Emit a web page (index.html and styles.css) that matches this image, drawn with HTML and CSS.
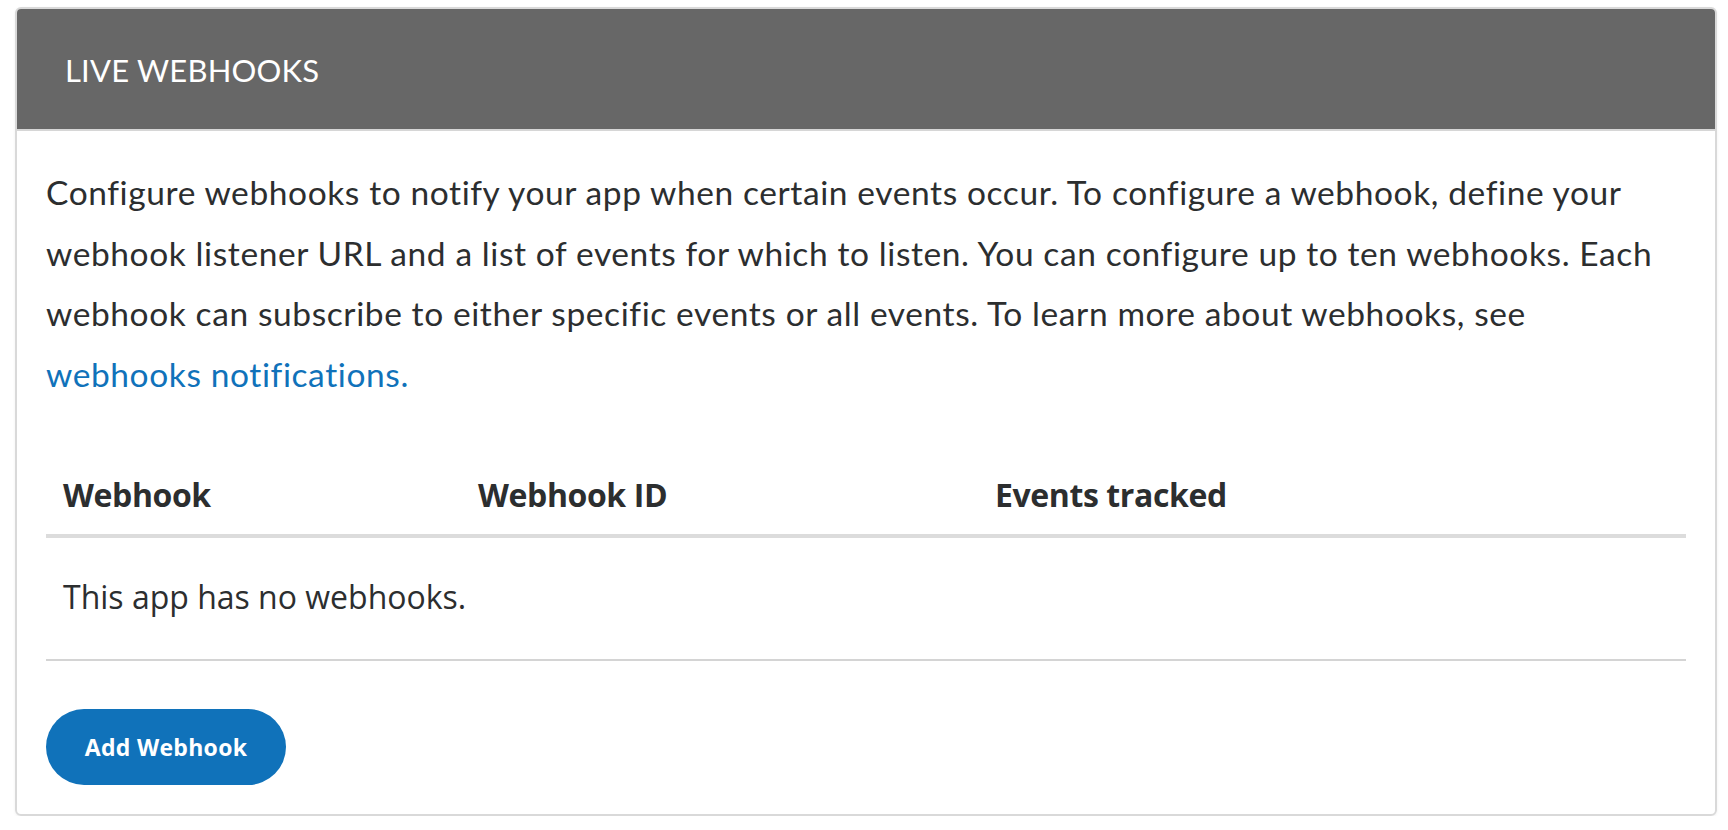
FILE: index.html
```html
<!DOCTYPE html>
<html lang="en">
<head>
<meta charset="utf-8">
<title>Live Webhooks</title>
<link rel="stylesheet" href="styles.css">
</head>
<body>
<section class="card">
  <header class="card-header">
    <h2 class="card-title">LIVE WEBHOOKS</h2>
  </header>
  <div class="card-body">
    <p class="intro">Configure webhooks to notify your app when certain events occur. To configure a webhook, define your webhook listener URL and a list of events for which to listen. You can configure up to ten webhooks. Each webhook can subscribe to either specific events or all events. To learn more about webhooks, see <a class="link" href="#">webhooks notifications.</a></p>
    <table class="hooks">
      <thead>
        <tr>
          <th class="col-name">Webhook</th>
          <th class="col-id">Webhook ID</th>
          <th class="col-events">Events tracked</th>
        </tr>
      </thead>
      <tbody>
        <tr>
          <td colspan="3" class="empty">This app has no webhooks.</td>
        </tr>
      </tbody>
    </table>
    <button class="btn-primary" type="button">Add Webhook</button>
  </div>
</section>
</body>
</html>
```

FILE: styles.css
```css
* { box-sizing: border-box; }

html, body {
  margin: 0;
  padding: 0;
  background: #ffffff;
}

body {
  padding: 7px 11px 0 15px;
  font-family: Lato, "Open Sans", sans-serif;
  color: #2c2e2f;
}

.card {
  border: 2px solid #d9d9d9;
  border-radius: 6px;
  overflow: hidden;
  box-shadow: 0 1px 3px rgba(0, 0, 0, 0.06);
}

.card-header {
  background: #676767;
  height: 122px;
  border-bottom: 2px solid #d6d6d6;
  display: flex;
  align-items: center;
  padding: 2px 0 0 48px;
}

.card-title {
  margin: 0;
  font-family: Lato, sans-serif;
  font-weight: 400;
  font-size: 31px;
  color: #ffffff;
  letter-spacing: 0.2px;
}

.card-body {
  padding: 31px 29px 29px 29px;
}

.intro {
  margin: 0 0 49px 0;
  font-size: 33.5px;
  line-height: 60.5px;
  letter-spacing: 0.6px;
  color: #2c2e2f;
}

.link {
  color: #1072ba;
  text-decoration: none;
  white-space: nowrap;
}

.hooks {
  width: 100%;
  border-collapse: collapse;
  font-family: "Open Sans", sans-serif;
  color: #2c2e2f;
  margin-bottom: 48px;
}

.hooks th {
  text-align: left;
  font-weight: 700;
  font-size: 32px;
  line-height: 44px;
  padding: 20px 17px 17px 17px;
  border-bottom: 4px solid #dcdcdc;
  letter-spacing: -0.4px;
}

.col-name { width: 415px; }
.col-id { width: 517px; }

.hooks td {
  font-size: 32px;
  line-height: 44px;
  padding: 37px 17px 40px 17px;
  border-bottom: 2px solid #d4d4d4;
}

.btn-primary {
  display: block;
  width: 240px;
  height: 76px;
  border: none;
  border-radius: 38px;
  background: #1072ba;
  color: #ffffff;
  font-family: "Open Sans", sans-serif;
  font-weight: 700;
  font-size: 23px;
  letter-spacing: 0.3px;
  cursor: pointer;
}
```
